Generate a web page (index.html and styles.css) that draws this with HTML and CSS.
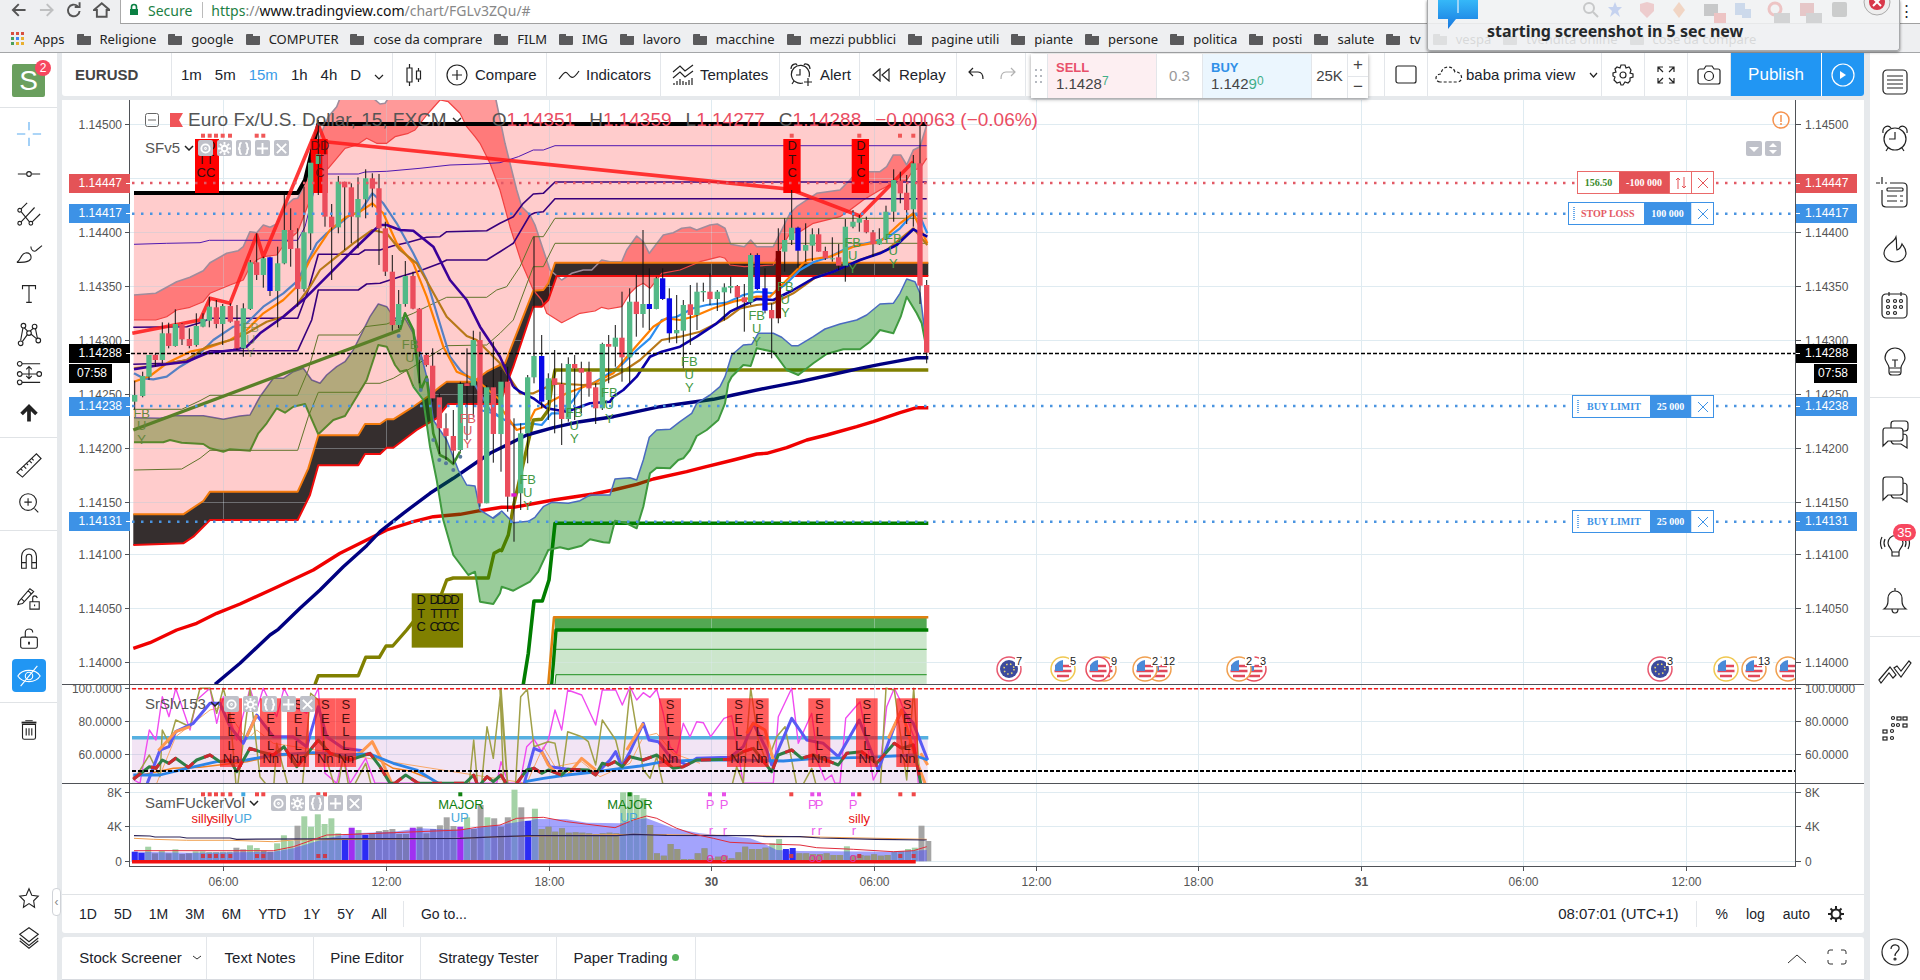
FILE: index.html
```html
<!DOCTYPE html>
<html lang="en">
<head>
<meta charset="utf-8">
<title>EURUSD chart</title>
<link rel="stylesheet" href="styles.css">
</head>
<body>
<div class="browser">
  <div class="navrow">
    <div class="navicons">
      <svg width="18" height="18" viewBox="0 0 18 18"><path d="M16 9H3M9 3L3 9l6 6" class="nv"/></svg>
      <svg width="18" height="18" viewBox="0 0 18 18" opacity=".3"><path d="M2 9h13M9 3l6 6-6 6" class="nv"/></svg>
      <svg width="18" height="18" viewBox="0 0 18 18"><path d="M15 10a6 6 0 1 1-2-5M15 1v5h-5" class="nv"/></svg>
      <svg width="18" height="18" viewBox="0 0 18 18"><path d="M1 9l8-7 8 7h-3v7H4V9z" class="nv"/></svg>
    </div>
    <div class="urlbar">
      <svg width="10" height="14" viewBox="0 0 10 14"><path d="M2.500 6V4a2.500 2.500 0 0 1 5 0v2" fill="none" stroke="#0b8043" stroke-width="1.600"/><rect x="1" y="6" width="8" height="6" fill="#0b8043"/></svg>
      <span class="green">Secure</span><i class="bar"></i>
      <span class="url"><span class="green">https</span>://<b>www.tradingview.com</b>/chart/FGLv3ZQu/#</span>
    </div>
  </div>
  <nav class="bookmarks">
    <a href="#" class="apps"><svg width="14" height="14" viewBox="0 0 14 14"><g fill="#d8503f"><path d="M0 0h3v3H0zM5 0h3v3H5zM10 0h3v3h-3z"/></g><path d="M0 5h3v3H0zM0 10h3v3H0z" fill="#4aa05a"/><path d="M5 5h3v3H5z" fill="#4285f4"/><path d="M10 5h3v3h-3zM5 10h3v3H5zM10 10h3v3h-3z" fill="#e8b030"/></svg>Apps</a>
    <a href="#">Religione</a><a href="#">google</a><a href="#">COMPUTER</a><a href="#">cose da comprare</a><a href="#">FILM</a><a href="#">IMG</a><a href="#">lavoro</a><a href="#">macchine</a><a href="#">mezzi pubblici</a><a href="#">pagine utili</a><a href="#">piante</a><a href="#">persone</a><a href="#">politica</a><a href="#">posti</a><a href="#">salute</a><a href="#">tv</a><a href="#">vespa</a><a href="#">tvendita online</a><a href="#">cose da compare</a>
  </nav>
  <div class="toast">
    <svg class="bubble" width="40" height="30" viewBox="0 0 40 30"><defs><linearGradient id="bg" x2="0" y2="1"><stop stop-color="#35b8f8"/><stop offset="1" stop-color="#1878e0"/></linearGradient></defs><path d="M0 0h40v19H18L10 29V19H0z" fill="url(#bg)"/><path d="M19 0h2v13h-2z" fill="#9cd4f8"/></svg>
    <span class="ghosts"><svg width="300" height="26" viewBox="0 0 300 26"><g opacity=".22"><circle cx="19" cy="8" r="5" fill="none" stroke="#333" stroke-width="2"/><path d="M23 12l5 5" stroke="#333" stroke-width="2"/><path d="M45 2l2 5h5l-4 4 2 6-5-4-5 4 2-6-4-4h5z" fill="#2a5fe0"/><path d="M70 4l7-2 7 2v7l-7 7-7-7z" fill="#e04848"/><path d="M109 2l6 8-6 8-6-8z" fill="#f07020"/><rect x="134" y="4" width="14" height="12" fill="#333"/><rect x="144" y="13" width="12" height="10" fill="#e02020"/><path d="M165 3h10v12h-10zM172 9h9v9h-9z" fill="#4a80d0"/><circle cx="205" cy="9" r="6" fill="none" stroke="#e02020" stroke-width="3"/><rect x="204" y="13" width="16" height="10" fill="#666"/><rect x="230" y="3" width="14" height="13" fill="#c03030"/><rect x="236" y="13" width="16" height="10" fill="#666"/><rect x="262" y="2" width="15" height="15" rx="2" fill="#444"/></g></svg></span>
    <strong>starting screenshot in 5 sec new</strong>
    <button class="tclose" aria-label="Close notification"><svg width="28" height="28" viewBox="0 0 28 28"><circle cx="14" cy="14" r="13" fill="#eee" stroke="#aaa"/><circle cx="14" cy="14" r="8" fill="#d8384a"/><path d="M10 10l8 8M18 10l-8 8" stroke="#fff" stroke-width="2"/></svg></button>
  </div>
  <span class="kebab">⋮</span>
</div>

<div class="app">
  <aside class="left">
    <div class="avatarbox"><span class="avatar">S</span><span class="badge two">2</span></div>
    <div class="tools a">
      <button aria-label="Cursor"><svg viewBox="0 0 28 28"><path d="M14 1v9M14 18v9M1 14h9M18 14h9" stroke="#5aabf0"/></svg></button>
      <button aria-label="Line"><svg viewBox="0 0 28 28"><path d="M2 14h9M17 14h9"/><circle cx="14" cy="14" r="2.500"/></svg></button>
      <button aria-label="Pitchfork"><svg viewBox="0 0 28 28"><circle cx="4" cy="10" r="2"/><circle cx="4" cy="24" r="2"/><circle cx="16" cy="24" r="2"/><path d="M5.500 8.500L12 2M5.500 22.500L20 7M17.500 22.500L26 14M5.500 11.500l9 11"/></svg></button>
      <button aria-label="Brush"><svg viewBox="0 0 28 28"><path d="M1 23c4-2 4-9 9-10 4-1 7 2 6 6-2 4-8 4-15 4zM16 6c0 5 4 6 6 4l6-5"/></svg></button>
      <button aria-label="Text"><svg viewBox="0 0 28 28"><path d="M7 9V5h14v4M14 5v18M11 23h6"/></svg></button>
      <button aria-label="Patterns"><svg viewBox="0 0 28 28"><circle cx="8" cy="5" r="2.500"/><circle cx="20" cy="6" r="2.500"/><circle cx="14" cy="13" r="2.500"/><circle cx="5" cy="24" r="2.500"/><circle cx="24" cy="21" r="2.500"/><path d="M7.500 7.500L5 21M9 7.500l4 4M18.500 8L15 11M21 8.500l2 10M12 15l-5 7M16 14l6 5"/></svg></button>
      <button aria-label="Prediction"><svg viewBox="0 0 28 28"><circle cx="4" cy="3" r="2.500"/><circle cx="4" cy="14" r="2.500"/><circle cx="4" cy="23" r="2.500"/><circle cx="25" cy="14" r="2.500"/><path d="M6.500 3H26M6.500 14h16M6.500 23H26M14 6v13M11 9l3-3 3 3M11 16l3 3 3-3"/></svg></button>
      <button aria-label="Arrow"><svg viewBox="0 0 28 28"><path d="M14 22V9M6 14l8-8 8 8" stroke-width="4"/></svg></button>
    </div>
    <div class="tools b">
      <button aria-label="Ruler"><svg viewBox="0 0 28 28"><path d="M1 22L22 2l5 5L7 27zM5 18l2 2M8 15l3 3M11 12l2 2M14 9l3 3M17 7l2 2"/></svg></button>
      <button aria-label="Zoom in"><svg viewBox="0 0 28 28"><circle cx="13" cy="13" r="9"/><path d="M20 20l4 4M9 13h8M13 9v8"/></svg></button>
    </div>
    <div class="tools c">
      <button aria-label="Magnet"><svg viewBox="0 0 28 28"><path d="M6 25V12a8 8 0 0 1 16 0v13h-5V13c0-4-6-4-6 0v12zM6 19h5M17 19h5"/></svg></button>
      <button aria-label="Stay in drawing mode"><svg viewBox="0 0 28 28"><path d="M3 18L15 4l4 3L7 20l-5 1zM6 15l3 3M13 6l4 4M15 18h10v8H15zM18 18v-4c0-3 4-3 5 0M20 21v2"/></svg></button>
      <button aria-label="Lock drawings"><svg viewBox="0 0 28 28"><rect x="5" y="13" width="18" height="12" rx="2"/><path d="M10 13V8c0-5 8-5 8 0"/><path d="M14 18v3" stroke-width="2"/></svg></button>
      <button class="on" aria-label="Hide drawings"><svg viewBox="0 0 28 28"><path d="M2 14c5-8 19-8 24 0-5 8-19 8-24 0zM23 3L5 25"/><circle cx="14" cy="14" r="4"/></svg></button>
    </div>
    <div class="tools d">
      <button aria-label="Remove"><svg viewBox="0 0 28 28"><path d="M7 8v14c0 2 1 2 2 2h10c1 0 2 0 2-2V8zM11 12v8M14 12v8M17 12v8M10 4h8"/><path d="M6 6h16" stroke-width="2"/></svg></button>
    </div>
    <div class="tools e">
      <button aria-label="Favorites"><svg viewBox="0 0 28 28"><path d="M14 4l3 7 7 1-5 5 1 7-6-4-6 4 1-7-5-5 7-1z"/></svg></button>
      <button aria-label="Object tree"><svg viewBox="0 0 28 28"><path d="M14 3l10 7-10 8-10-8zM4 14l10 8 10-8M4 17l10 8 10-8"/></svg></button>
    </div>
    <button class="fold" aria-label="Collapse toolbar">‹</button>
  </aside>

  <main class="center">
    <header class="topbar">
      <div class="cell sym">EURUSD</div>
      <div class="cell ints"><button>1m</button><button>5m</button><button class="act">15m</button><button>1h</button><button>4h</button><button>D</button><button aria-label="More intervals"><svg width="10" height="6" viewBox="0 0 10 6"><path d="M1 1l4 4 4-4"/></svg></button></div>
      <button class="cell candle" aria-label="Candles"><svg width="18" height="24" viewBox="0 0 18 24"><path d="M2 5h5v14H2zM4.500 1v4M4.500 19v4M11.500 8h4v8h-4zM13.500 5v3M13.500 16v3"/></svg></button>
      <button class="cell cmp"><svg width="22" height="22" viewBox="0 0 22 22"><circle cx="11" cy="11" r="10"/><path d="M6 11h10M11 6v10"/></svg>Compare</button>
      <button class="cell ind"><svg width="22" height="12" viewBox="0 0 22 12"><path d="M1 10c4-5 6-9 9-5s5 6 11-3"/></svg>Indicators</button>
      <button class="cell tpl"><svg width="22" height="22" viewBox="0 0 22 22"><path d="M1 8l7-6 5 5 8-6M1 14l7-6 5 5 8-6M2 21v-2M5 21v-4M8 21v-6M11 21v-4M14 21v-3M17 21v-5M20 21v-7"/></svg>Templates</button>
      <button class="cell alr"><svg width="23" height="23" viewBox="0 0 23 23"><path d="M13 20A9 9 0 1 1 19 14M10 6v6H6M1 6c0-5 5-6 6-4M20 6c0-5-5-6-6-4M18 15v8M14 19h8M4 18l-2 3"/></svg>Alert</button>
      <button class="cell rep"><svg width="18" height="14" viewBox="0 0 18 14"><path d="M8 1v12L1 7zM17 1v12l-7-6z"/></svg>Replay</button>
      <div class="cell undo"><button aria-label="Undo"><svg width="16" height="13" viewBox="0 0 16 13"><path d="M5 1L1 5l4 4M1 5h9c4 0 5 3 5 7"/></svg></button><button aria-label="Redo" class="dim"><svg width="16" height="13" viewBox="0 0 16 13"><path d="M11 1l4 4-4 4M15 5H6c-4 0-5 3-5 7"/></svg></button></div>
      <div class="trade">
        <span class="grip"><svg width="8" height="15" viewBox="0 0 8 15"><path d="M0 1h2M5 1h2M0 7h2M5 7h2M0 13h2M5 13h2" stroke="#b5b9c0" stroke-width="2"/></svg></span>
        <button class="sell"><b>SELL</b><span>1.1428<i>7</i></span></button>
        <span class="spread">0.3</span>
        <button class="buy"><b>BUY</b><span>1.142<em>9</em><i>0</i></span></button>
        <span class="qty">25K</span>
        <span class="pm"><button>+</button><button>−</button></span>
      </div>
      <div class="cell spacer"></div>
      <button class="cell lay" aria-label="Layout"><svg width="22" height="19" viewBox="0 0 22 19"><rect x="1" y="1" width="20" height="17" rx="2"/></svg></button>
      <button class="cell view"><svg width="28" height="17" viewBox="0 0 28 17"><path d="M5 16c-6-1-5-8 1-8C7-1 18-1 20 6c7-1 9 9 3 10z" stroke-dasharray="3 2"/></svg>baba prima view<svg width="9" height="6" viewBox="0 0 9 6" class="chev"><path d="M1 1l3.500 4L8 1"/></svg></button>
      <button class="cell gear" aria-label="Settings"><svg width="22" height="22" viewBox="0 0 22 22"><circle cx="11" cy="11" r="3"/><path d="M9 1h4l1 3 3-1 2 3-1 3 3 1v3l-3 1 0 3-2 2-3-1-2 3h-2l-1-3-3 1-3-3 1-3-2-1V9l3-1-1-3 2-2 3 1z"/></svg></button>
      <button class="cell full" aria-label="Fullscreen"><svg width="18" height="18" viewBox="0 0 18 18"><path d="M1 6V1h5M12 1h5v5M17 12v5h-5M6 17H1v-5M1 1l5 5M17 1l-5 5M17 17l-5-5M1 17l5-5"/></svg></button>
      <button class="cell cam" aria-label="Snapshot"><svg width="24" height="20" viewBox="0 0 24 20"><path d="M3 4h4l2-3h6l2 3h4c1 0 2 1 2 2v11c0 1-1 2-2 2H3c-1 0-2-1-2-2V6c0-1 1-2 2-2z"/><circle cx="12" cy="11" r="4.500"/></svg></button>
      <button class="pub">Publish</button>
      <button class="play" aria-label="Stream"><svg width="24" height="24" viewBox="0 0 24 24"><circle cx="12" cy="12" r="11" fill="none" stroke="#fff"/><path d="M9 8v8l6-4z" fill="#fff" stroke="none"/></svg></button>
    </header>

    <section class="chart">
      <svg id="plot" viewBox="62 100 1802 794" preserveAspectRatio="xMinYMin meet" role="img" aria-label="EURUSD 15 minute chart"></svg>
      <div class="legend main">
        <svg width="14" height="14" viewBox="0 0 14 14"><rect x=".5" y=".5" width="13" height="13" rx="2" fill="none" stroke="#666"/><path d="M3 7h8" stroke="#666"/></svg>
        <svg class="flag" width="13" height="14" viewBox="0 0 13 14"><path d="M0 0h13l-4 7 4 7H0z" fill="#f05458"/></svg>
        <span class="ttl">Euro Fx/U.S. Dollar, 15, FXCM</span>
        <svg width="10" height="6" viewBox="0 0 10 6"><path d="M1 1l4 4 4-4" fill="none" stroke="#333" stroke-width="1.500"/></svg>
        <span class="ohlc"><span>O<b>1.14351</b></span><span>H<b>1.14359</b></span><span>L<b>1.14277</b></span><span>C<b>1.14288</b></span><b>−0.00063 (−0.06%)</b></span>
      </div>
      <div class="legend l1"><span>SFv5</span></div>
      <div class="legend l2"><span>SrSlv153</span></div>
      <div class="legend l3"><span>SamFUckerVol</span></div>
      <svg class="warn" width="18" height="18" viewBox="0 0 18 18"><circle cx="9" cy="9" r="8" fill="none" stroke="#f5924e" stroke-width="1.500"/><path d="M9 4v7M9 12v2" stroke="#f5924e" stroke-width="1.500"/></svg>
      <div class="panebtns"><button aria-label="Collapse pane"><svg viewBox="0 0 16 15"><path d="M3 6h10l-5 5z" fill="#fff" stroke="none"/></svg></button><button aria-label="Maximize pane"><svg viewBox="0 0 16 15"><path d="M4 6l4-4 4 4zM4 9h8l-4 4z" fill="#fff" stroke="none"/></svg></button></div>
      <div class="order o1 red"><span class="pl">156.50</span><span class="q">-100 000</span><button aria-label="Reverse"><svg width="12" height="12" viewBox="0 0 12 12"><path d="M3 12V1M1 3l2-2 2 2M9 0v11M7 9l2 2 2-2"/></svg></button><button aria-label="Close position"><svg width="10" height="10" viewBox="0 0 10 10"><path d="M0 0l10 10M10 0L0 10"/></svg></button></div>
      <div class="order o2"><span class="name stop">STOP LOSS</span><span class="q">100 000</span><button aria-label="Cancel stop loss"><svg width="10" height="10" viewBox="0 0 10 10"><path d="M0 0l10 10M10 0L0 10"/></svg></button></div>
      <div class="order o3"><span class="name">BUY LIMIT</span><span class="q">25 000</span><button aria-label="Cancel order"><svg width="10" height="10" viewBox="0 0 10 10"><path d="M0 0l10 10M10 0L0 10"/></svg></button></div>
      <div class="order o4"><span class="name">BUY LIMIT</span><span class="q">25 000</span><button aria-label="Cancel order"><svg width="10" height="10" viewBox="0 0 10 10"><path d="M0 0l10 10M10 0L0 10"/></svg></button></div>
    </section>

    <div class="rangebar">
      <div class="ranges"><button>1D</button><button>5D</button><button>1M</button><button>3M</button><button>6M</button><button>YTD</button><button>1Y</button><button>5Y</button><button>All</button></div>
      <button class="goto">Go to...</button>
      <span class="clock">08:07:01 (UTC+1)</span>
      <div class="scale"><button>%</button><button>log</button><button>auto</button><button aria-label="Chart settings"><svg width="16" height="16" viewBox="0 0 16 16"><circle cx="8" cy="8" r="4.500" fill="none" stroke="#222" stroke-width="2"/><path d="M8 0v3M8 13v3M0 8h3M13 8h3M2.500 2.500l2 2M11.500 11.500l2 2M2.500 13.500l2-2M11.500 4.500l2-2" stroke="#222" stroke-width="2"/></svg></button></div>
    </div>

    <footer class="tabs">
      <button class="t1">Stock Screener<svg width="10" height="6" viewBox="0 0 10 6"><path d="M1 1l4 3 4-3" fill="none" stroke="#333"/></svg></button><button class="t2">Text Notes</button><button class="t3">Pine Editor</button><button class="t4">Strategy Tester</button><button class="t5">Paper Trading<i class="live"></i></button>
      <div class="tright"><button aria-label="Expand"><svg width="20" height="10" viewBox="0 0 20 10"><path d="M1 9l9-8 9 8" fill="none" stroke="#333"/></svg></button><button aria-label="Maximize"><svg width="20" height="16" viewBox="0 0 20 16"><path d="M1 5V3q0-2 2-2h3M14 1h3q2 0 2 2v2M19 11v2q0 2-2 2h-3M6 15H3q-2 0-2-2v-2" fill="none" stroke="#333"/></svg></button></div>
    </footer>
  </main>

  <aside class="right">
    <div class="rg">
      <button aria-label="Watchlist"><svg viewBox="0 0 28 28"><rect x="2" y="2" width="24" height="24" rx="4"/><path d="M6 8h16M6 12h16M6 16h16M6 20h16"/></svg></button>
      <button aria-label="Alerts"><svg viewBox="0 0 28 28"><circle cx="14" cy="15" r="11"/><path d="M14 8v7H8M2 9C1 3 7 0 10 4M26 9c1-6-5-9-8-5M7 24l-2 3M21 24l2 3"/></svg></button>
      <button aria-label="Data window"><svg viewBox="0 0 28 28"><path d="M9 3h13q4 0 4 4v16q0 4-4 4H5q-4 0-4-4V10M1-3v7M-5 3h4M4 3h2M6 16h10M6 21h10M19 16h3M19 21h3"/><rect x="6" y="8" width="16" height="3" rx="1"/></svg></button>
      <button aria-label="Hotlists"><svg viewBox="0 0 28 28"><path d="M15 1C13 7 3 9 3 17c0 12 22 12 22 0 0-5-3-7-4-9-1 3-2 5-5 6-1-3 0-8-1-13z"/></svg></button>
      <button aria-label="Calendar"><svg viewBox="0 0 28 28"><rect x="1" y="2" width="25" height="24" rx="4"/><path d="M8 0v4M20 0v4"/><g><circle cx="7" cy="9" r="1.500"/><circle cx="14" cy="9" r="1.500"/><circle cx="20" cy="9" r="1.500"/><circle cx="7" cy="15" r="1.500"/><circle cx="14" cy="15" r="1.500"/><circle cx="20" cy="15" r="1.500"/><circle cx="7" cy="21" r="1.500"/><circle cx="14" cy="21" r="1.500"/></g></svg></button>
      <button aria-label="Ideas"><svg viewBox="0 0 28 28"><path d="M8 20c0-4-4-6-4-10a10 10 0 0 1 20 0c0 4-4 6-4 10v4q0 3-3 3h-6q-3 0-3-3zM8 20h12M9 24h10M14 19v-7M11 12h6"/></svg></button>
    </div>
    <div class="rg">
      <button aria-label="Public chats"><svg viewBox="0 0 28 28"><path d="M4 9h15q3 0 3 3v7q0 3-3 3H7l-5 5V12q0-3 2-3zM10 9V5q0-3 3-3h11q3 0 3 3v4q0 3-3 3h-2M22 15q4 0 4 3v11l-6-4h-7q-2 0-3-3"/></svg></button>
      <button aria-label="Private chats"><svg viewBox="0 0 28 28"><path d="M5 2h14q3 0 3 3v12q0 3-3 3H7l-5 5V5q0-3 3-3zM22 8q4 0 4 3v16l-6-4h-7q-2 0-3-3"/></svg></button>
      <button aria-label="Streams"><svg viewBox="0 0 28 28"><path d="M11 21c0-3-4-5-4-9a7.500 7.500 0 0 1 15 0c0 4-4 6-4 9v4h-7zM11 21h7M1 6q-3 6 0 12M4 8q-2 4 0 8M27 6q3 6 0 12M24 8q2 4 0 8"/></svg><span class="badge n35">35</span></button>
      <button aria-label="Notifications"><svg viewBox="0 0 28 28"><path d="M3 22q4-3 4-8v-3a7 7 0 0 1 14 0v3q0 5 4 8zM11 22q0 4 3 4t3-4M14 4V1"/></svg></button>
    </div>
    <div class="rg">
      <button aria-label="Order panel"><svg viewBox="0 0 28 28"><path d="M-2 22L9 9l6 8-3 3-4-5-8 10zM30 5L20 19l-7-9 3-2 4 5 8-10z"/></svg></button>
      <button aria-label="Depth of market"><svg viewBox="0 0 28 28"><g><rect x="2" y="16" width="4" height="3"/><rect x="2" y="23" width="4" height="3"/><circle cx="11" cy="17" r="1.500"/><circle cx="11" cy="24" r="1.500"/><circle cx="12" cy="4" r="1.500"/><circle cx="12" cy="11" r="1.500"/><circle cx="17" cy="11" r="1.500"/><rect x="16" y="3" width="4" height="3"/><rect x="22" y="3" width="4" height="3"/><rect x="22" y="10" width="4" height="3"/></g></svg></button>
    </div>
    <div class="rg last"><button aria-label="Help"><svg viewBox="0 0 28 28"><circle cx="14" cy="14" r="13"/><path d="M10 11c0-6 9-5 8 0-1 3-4 3-4 7"/><circle cx="14" cy="21" r="1"/></svg></button></div>
  </aside>
</div>
<script src="chart.js"></script>
</body>
</html>
```
FILE: styles.css
```css
* { box-sizing: border-box; }
body { margin: 0; height: 100vh; display: flex; flex-direction: column; overflow: hidden; background: #e6e9ec; color: #20232b; font-family: "Liberation Sans", Arial, sans-serif; font-size: 15px; }
button { font: inherit; color: inherit; background: none; border: 0; padding: 0; margin: 0; cursor: pointer; }
a { color: inherit; text-decoration: none; }

.browser { position: relative; flex: none; font-family: "Noto Sans", sans-serif; background: #eeeff1; border-bottom: 1px solid #a4a6a8; }
.navrow { display: flex; height: 24px; overflow: hidden; }
.navicons { display: flex; gap: 10px; padding: 1px 10px; width: 120px; }
.nv { fill: none; stroke: #555; stroke-width: 2; }
.urlbar { flex: 1; display: flex; align-items: center; background: #fff; border-left: 1px solid #aaa; border-bottom: 1px solid #a0a0a0; padding: 0 8px 3px; font-size: 14px; color: #888; }
.urlbar .green { color: #1c8043; }
.urlbar svg + .green { margin-left: 9px; }
.url b { font-weight: 400; color: #111; }
.bar { width: 1px; height: 16px; background: #bbb; margin: 0 8px 0 10px; }
.bookmarks { display: flex; gap: 12px; height: 28px; align-items: center; padding: 2px 0 0 11px; font-size: 13px; color: #222; white-space: nowrap; }
.bookmarks a { display: flex; align-items: center; gap: 9px; }
.bookmarks a:not(.apps)::before { content: ""; width: 14px; height: 11px; border-radius: 1px; background: linear-gradient(#eeeff1, #eeeff1) 100% 0 / 7px 2px no-repeat, #5a5a5c; }
.toast { position: absolute; right: 20px; top: 0; width: 473px; height: 51px; background: rgba(240,241,242,.88); border: 1px solid #a8aaac; border-top: 0; box-shadow: 0 1px 3px rgba(0,0,0,.5); border-radius: 0 0 3px 3px; }
.toast strong { position: absolute; left: 59px; top: 20px; font-size: 16px; line-height: 22px; color: #26292b; white-space: nowrap; }
.bubble { position: absolute; left: 10px; top: 0; }
.ghosts { position: absolute; left: 142px; top: 0; }
.tclose { position: absolute; right: 8px; top: -12px; }
.kebab { position: absolute; right: 6px; top: 0; font-size: 15px; line-height: 20px; }

.app { flex: 1; min-height: 0; display: flex; }
.left { position: relative; flex: none; width: 57px; background: #fff; display: flex; flex-direction: column; }
.avatarbox { position: relative; height: 54px; padding: 11px 12px; }
.avatar { display: block; width: 33px; height: 33px; border-radius: 2px; background: #6a9f5e; color: #fff; font-size: 28px; line-height: 33px; text-align: center; }
.badge { position: absolute; background: #f7475f; color: #fff; border-radius: 9px; text-align: center; }
.two { left: 35px; top: 7px; width: 16px; height: 16px; font-size: 12px; line-height: 16px; }
.tools { display: flex; flex-direction: column; align-items: center; border-top: 1px solid #e0e3e6; padding-bottom: 4px; }
.tools button { height: 40px; width: 34px; display: flex; align-items: center; justify-content: center; }
.tools svg, .rg svg { width: 28px; height: 28px; fill: none; stroke: #222; stroke-width: 1.2; overflow: visible; }
.tools.a { padding: 6px 0 3px; }
.tools.b { padding: 8px 0; }
.tools.b button { height: 38px; }
.tools.c { padding-top: 7px; }
.tools.d { padding-top: 7px; }
.tools.e { margin-top: auto; border: 0; padding-bottom: 22px; }
.tools .on { background: #2196f3; border-radius: 4px; height: 33px; margin: 1px 0 6px; }
.tools .on svg { stroke: #fff; }
.tools button svg { width: 26px; height: 26px; }
.fold { position: absolute; right: -4px; bottom: 64px; width: 9px; height: 28px; background: #fff; border: 1px solid #d0d3d8; border-radius: 4px; color: #888; font-size: 12px; line-height: 24px; }

.center { flex: 1; min-width: 0; margin: 0 6px 0 5px; display: flex; flex-direction: column; }
.topbar { position: relative; z-index: 2; flex: none; height: 43px; display: flex; background: #fff; border-radius: 0 0 3px 3px; white-space: nowrap; }
.topbar svg { fill: none; stroke: #222; stroke-width: 1.2; flex: none; }
.cell { display: flex; align-items: center; border-right: 1px solid #e3e6ea; }
.sym { width: 110px; padding-left: 13px; font-weight: 700; color: #444; }
.ints { width: 221px; padding-left: 9px; gap: 13px; }
.ints .act { color: #3a9be8; }
.candle { width: 43px; justify-content: center; }
.cmp { width: 111px; padding-left: 10px; gap: 7px; }
.ind { width: 114px; padding-left: 11px; gap: 6px; }
.tpl { width: 119px; padding-left: 11px; gap: 6px; }
.alr { width: 80px; padding-left: 10px; gap: 7px; }
.rep { width: 97px; padding-left: 12px; gap: 9px; }
.undo { width: 69px; padding-left: 11px; gap: 16px; }
.dim { opacity: .35; }
.trade { display: flex; width: 337px; height: 44px; margin: 1px 0 0 5px; background: #fff; box-shadow: 0 1px 4px rgba(0,0,0,.4); color: #444; font-size: 15px; }
.grip { width: 16px; display: grid; place-items: center; }
.sell, .buy { display: flex; flex-direction: column; justify-content: center; align-items: flex-start; width: 110px; padding-left: 8px; line-height: 17px; border: 1px solid #e3e6ea; border-width: 0 1px; }
.sell { background: #fdeff2; }
.buy { background: #ebf6fe; }
.sell b, .buy b { font-size: 13px; line-height: 15px; color: #e8506a; }
.buy b { color: #2f90e8; }
.trade i, .trade em { font-style: normal; color: #3fae88; }
.trade i { font-size: 12px; vertical-align: 4px; line-height: 10px; }
.spread { width: 45px; line-height: 44px; text-align: center; color: #999; }
.qty { width: 35px; line-height: 44px; text-align: center; }
.pm { flex: 1; display: flex; flex-direction: column; border-left: 1px solid #e3e6ea; }
.pm button { flex: 1; font-size: 17px; line-height: 20px; }
.pm button + button { border-top: 1px solid #e3e6ea; }
.spacer { flex: 1; }
.lay, .gear, .full, .cam { width: 43px; justify-content: center; }
.view { width: 174px; padding-left: 7px; gap: 3px; }
.view .chev { margin-left: 11px; }
.pub { width: 91px; background: #2196f3; color: #fff; font-size: 17px; border-right: 1px solid #fff; }
.play { width: 42px; background: #2196f3; display: grid; place-items: center; border-radius: 0 0 3px 0; }

.chart { position: relative; flex: 1; min-height: 0; margin-top: 4px; background: #fff; }
#plot { display: block; width: 100%; height: 100%; }
#plot text { font-family: "Liberation Sans", Arial, sans-serif; }
.legend { position: absolute; left: 83px; display: flex; align-items: center; gap: 4px; font-size: 15px; line-height: 18px; color: #555; }
.legend.main { top: 7px; gap: 11px; font-size: 19px; line-height: 26px; white-space: nowrap; }
.flag + .ttl { margin-left: -6px; }
.ttl + svg { margin-left: -6px; }
.ohlc { display: flex; gap: 14px; margin-left: 19px; }
.ohlc b { font-weight: 400; color: #ea4d63; }
.legend.l1 { top: 39px; }
.legend.l2 { top: 595px; }
.legend.l3 { top: 694px; }
.legend .btns { display: flex; gap: 4px; }
.legend.l3 .btns { margin-left: 8px; }
.legend .btns button, .panebtns button { width: 15px; height: 16px; border-radius: 2px; background: #bfc1c9; display: grid; place-items: center; }
.legend .btns svg { width: 13px; height: 13px; fill: none; stroke: #fff; stroke-width: 2; }
.panebtns { position: absolute; right: 83px; top: 41px; display: flex; gap: 3px; }
.panebtns button { width: 16px; height: 15px; }
.warn { position: absolute; right: 74px; top: 11px; }
.order { position: absolute; right: 150px; display: flex; height: 23px; background: #fff; border: 1px solid #3d92e6; font: 700 10px/21px "Liberation Serif", serif; color: #3d92e6; white-space: nowrap; }
.order.red { border-color: #ea6a6a; }
.order .name { width: 77px; padding-left: 14px; background: repeating-linear-gradient(#6aaaea 0 1px, transparent 1px 2px) 4px 50% / 2px 14px no-repeat; }
.order .stop { color: #e45a64; padding-left: 12px; width: 75px; }
.order .q { background: #3d92e6; color: #fff; width: 41px; text-align: center; }
.order.o2 .q { width: 47px; }
.order.red .q { background: #e45357; width: 50px; }
.order .pl { width: 41px; text-align: center; color: #3a8a2a; }
.order button { width: 22px; display: grid; place-items: center; border-left: 1px solid #cfe3f8; }
.order.red button { border-color: #ea6a6a; }
.order svg { fill: none; stroke: #3d92e6; }
.order.red svg { stroke: #e45357; }
.o1 { top: 71px; } .o2 { top: 102px; } .o3 { top: 295px; } .o4 { top: 410px; }

.rangebar { flex: none; height: 39px; background: #fff; border-top: 1px solid #e0e3e6; display: flex; align-items: center; font-size: 14px; border-radius: 0 0 3px 3px; }
.ranges { display: flex; gap: 17px; padding: 0 16px 0 17px; height: 26px; border-right: 1px solid #e3e6ea; }
.goto { margin-left: 17px; }
.clock { margin-left: auto; padding-right: 17px; border-right: 1px solid #e3e6ea; font-size: 15px; line-height: 26px; }
.scale { display: flex; gap: 18px; padding: 0 20px 0 19px; align-items: center; }
.scale svg { display: block; }
.tabs { flex: none; height: 43px; margin: 4px 0 0; background: #fff; border-bottom: 1px solid #d8dbe0; border-radius: 3px 3px 0 0; display: flex; }
.tabs > button { border-right: 1px solid #e3e6ea; font-size: 15px; padding-bottom: 2px; }
.t1 { width: 145px; padding-left: 13px; } .t1 svg { margin: 0 0 2px 10px; }
.t2 { width: 107px; } .t3 { width: 107px; } .t4 { width: 136px; } .t5 { width: 139px; }
.live { display: inline-block; width: 7px; height: 7px; border-radius: 50%; background: #56b35c; margin: 0 0 2px 4px; }
.tright { margin-left: auto; display: flex; gap: 20px; padding-right: 17px; align-items: center; }

.right { flex: none; width: 50px; background: #fff; display: flex; flex-direction: column; }
.rg { display: flex; flex-direction: column; padding: 7px 0; border-bottom: 1px solid #e0e3e6; }
.rg:first-child { padding-top: 1px; }
.rg button { position: relative; height: 56px; display: grid; place-items: center; }
.rg:nth-child(3) { border: 0; }
.rg.last { margin-top: auto; border: 0; padding: 0; }
.n35 { right: 4px; top: 7px; width: 23px; height: 17px; font-size: 13px; line-height: 17px; }
```
FILE: chart.js
```javascript
(function () {
const svg = document.getElementById('plot');
const out = [];
// Data points are stored in thirds of a pixel, relative to the tile named by the letter before them.
const tile = { A: [0, 0], B: [0, 840], C: [1440, 0], D: [1440, 840], E: [180, 1740], F: [1500, 1740] };
const X = (t, x) => Math.round((tile[t][0] + x) / 3 * 10) / 10;
const Y = (t, y) => Math.round((tile[t][1] + y) / 3 * 10) / 10 + 100;
function pts(s, rev) {
  let t = 'A';
  const r = [];
  s.split(/\s+/).forEach(k => {
    if (tile[k]) t = k;
    else if (k) { const [x, y] = k.split(',').map(Number); r.push(X(t, x) + ',' + Y(t, y)); }
  });
  if (rev) r.reverse();
  return r.join(' ');
}
const line = (s, c, w, extra = '') => out.push(`<polyline points="${pts(s)}" fill="none" stroke="${c}" stroke-width="${w}" stroke-linejoin="round" ${extra}/>`);
const band = (a, b, c) => out.push(`<polygon points="${pts(a)} ${pts(b, true)}" fill="${c}"/>`);
const rect = (x, y, w, h, c, extra = '') => out.push(`<rect x="${x}" y="${y}" width="${w}" height="${h}" fill="${c}" ${extra}/>`);
const box = (t, x1, y1, x2, y2, c) => rect(X(t, x1), Y(t, y1), (x2 - x1) / 3, (y2 - y1) / 3, c);
const text = (x, y, s, size, c, anchor = 'middle', extra = '') => out.push(`<text x="${x}" y="${y}" font-size="${size}" fill="${c}" text-anchor="${anchor}" ${extra}>${s}</text>`);
const seg = (x1, y1, x2, y2, c, w = 1, extra = '') => out.push(`<line x1="${x1}" y1="${y1}" x2="${x2}" y2="${y2}" stroke="${c}" stroke-width="${w}" ${extra}/>`);
const openPane = id => out.push(`<g clip-path="url(#${id})">`);
const closePane = () => out.push('</g>');

out.push('<defs><clipPath id="p1"><rect x="130" y="100" width="1665" height="584"/></clipPath><clipPath id="p2"><rect x="130" y="685" width="1665" height="98"/></clipPath><clipPath id="p3"><rect x="130" y="784" width="1665" height="82"/></clipPath></defs>');

const gridX = [[223.5, '06:00'], [386.5, '12:00'], [549.5, '18:00'], [711.5, '30'], [874.5, '06:00'], [1036.5, '12:00'], [1198.5, '18:00'], [1361.5, '31'], [1523.5, '06:00'], [1686.5, '12:00']];
const gridY = [[124.5, '1.14500'], [178.5, ''], [232.5, '1.14400'], [286.5, '1.14350'], [340.5, '1.14300'], [394.5, '1.14250'], [448.5, '1.14200'], [502.5, '1.14150'], [554.5, '1.14100'], [608.5, '1.14050'], [662.5, '1.14000'], [688.5, '100.0000'], [721.5, '80.0000'], [754.5, '60.0000'], [792.5, '8K'], [826.5, '4K'], [861.5, '0']];
const grid = op => {
  gridX.forEach(g => seg(g[0], 100, g[0], 866, '#dfebf1', 1, `opacity="${op}"`));
  gridY.forEach(g => seg(130, g[0], 1795, g[0], '#dfebf1', 1, `opacity="${op}"`));
};
grid(1);

/* price pane */
openPane('p1');
const topEdge = 'A 402,279 893,279 915,240 955,72 C 1342,72';
const cloudHi = 'B 400,403 550,403 610,363 630,335 893,335 925,265 955,166 1075,166 1095,132 1140,132 1160,118 1180,118 1240,80 1290,45 A 1320,860 1340,845 1420,845 1460,815 1500,795 C 75,790 160,572 190,570 205,550 225,488 1345,488';
const cloudLo = 'B 400,495 550,490 580,470 630,420 893,420 930,345 955,256 1075,256 1095,222 1140,222 1160,203 1180,203 1250,150 1310,115 1345,72 1500,72 C 60,910 85,840 100,800 160,620 185,620 205,600 230,528 1345,528';
band(topEdge, cloudHi, 'rgba(255,0,0,.2)');
const upHi = 'A 402,585 467,580 500,562 530,545 570,532 610,512 630,488 680,460 715,452 730,440 750,395 770,398 790,375 810,382 830,372 855,320 880,297 893,295 905,270 930,210 955,120 985,50 1010,20 1020,-5 1120,-5 1140,12 1155,10 1165,-5 1485,-5 C 48,0 75,130 110,270 125,320 150,345 165,375 190,450 210,510 245,540 275,520 310,510 335,510 365,480 390,485 425,485 440,450 470,408 490,425 508,460 550,405 580,398 605,385 630,382 650,390 690,375 712,372 735,385 752,433 793,440 812,420 830,440 880,440 900,400 930,340 950,320 1010,280 1080,270 1110,240 1130,215 1200,215 1220,200 1240,165 1262,165 1280,195 1300,150 1320,140 1340,75';
const upLo = 'A 402,660 467,660 500,650 530,630 570,622 610,605 630,580 690,555 730,540 750,500 770,480 790,470 830,465 855,430 893,395 930,300 955,230 985,205 1010,175 1035,145 1070,135 1100,115 1130,130 1160,130 1185,110 1225,100 1245,90 1280,45 1320,0 1345,5 1380,40 1400,80 1425,110 1440,130 C 30,190 60,270 90,380 125,490 160,570 185,600 200,640 245,668 300,640 345,633 365,622 385,627 425,620 450,580 470,560 490,550 510,565 530,540 545,520 600,510 660,485 720,470 735,475 750,495 793,500 880,495 900,450 930,400 960,395 1000,370 1080,350 1110,330 1150,300 1200,270 1240,250 1280,240 1300,210 1320,205 1340,175';
band(upHi, upLo, 'rgba(255,0,0,.4)');
band(cloudHi, cloudLo, 'rgba(20,12,12,.86)');
const gUp1 = 'B 402,113 480,115 520,107 610,107 670,118 720,108 750,105 780,50 A 820,835 850,835 880,815 910,805 935,840 960,850 980,825 1010,800 1035,785 1060,750 1085,700 1110,650 1135,612 1160,620 1180,650 1200,665 1215,655 1240,700';
const gUp2 = 'A 1240,700 1262,760 1285,850 B 1300,120 1320,150 1340,180 1375,270 1400,315 1425,318 1440,390 1480,415 1500,400 D 40,413 65,393 100,428 145,424 165,412 190,380 215,367 265,370 300,362 330,345 390,345 405,297 450,293 470,300 490,240 508,172 530,150 570,148 600,125 635,100 650,70 690,45 720,20 C 735,830 755,765 790,735 815,733 835,700 880,700 905,712 935,737 955,737 1000,710 1035,687 1080,672 1130,660 1160,645 1200,612 1240,610 1260,580 1280,537 1305,545 1320,580 1340,740';
const gLo1 = 'B 402,187 490,187 510,180 545,188 610,192 630,205 670,215 690,208 750,212 775,160 800,130 830,85 855,98 880,80 915,72 955,163 1000,120 1035,108 1070,50 1100,0 A 1120,780 1135,735 1160,740 1185,795 1200,815 1220,810 1240,860';
const gLo2 = 'A 1240,860 B 1270,60 1290,200 1310,300 1330,420 1360,525 1405,585 1425,575 1440,665 1480,672 1500,640 D 65,620 100,632 150,605 175,575 205,510 240,502 265,508 305,497 330,478 370,487 388,488 405,422 440,430 470,445 490,380 510,280 530,263 570,265 595,240 610,235 630,210 650,168 680,150 715,120 735,70 745,10 C 755,830 790,795 812,798 830,745 880,755 920,810 955,825 1000,790 1040,762 1090,748 1140,748 1170,725 1200,690 1240,700 1262,650 1280,590 1310,640 1325,670 1340,750';
box('D', 225, 712, 1340, 750, '#52a852');
box('D', 225, 750, 1340, 915, '#cce6cc');
grid(.35);
line(upHi, '#a08c9c', 1.6); line(upLo, '#f24242', 1.2);
line(gUp1, '#7a58a8', 1.5);
line(gLo1, '#5a8a32', 2);
line('D 228,808 1340,808', '#1f8f1f', 1); line('D 225,913 228,884 1340,884', '#1f8f1f', 1);
line('A 402,433 500,430 600,428 628,421 893,421 915,380 955,222 1075,222 1095,216 1160,214 1260,205 1350,195 C 0,192 60,188 115,170 160,150 190,150 225,137 1340,137', '#5018b0', 1);
line('A 400,682 560,680 610,665 630,655 893,655 925,570 955,463 1075,463 1095,450 1140,450 1180,437 1220,428 1280,412 1320,410 1340,395 C 20,392 60,370 100,350 130,310 160,282 190,280 225,246 1340,246', '#38007c', 1.6);
line('A 400,793 500,790 560,780 630,752 893,752 935,660 955,570 1075,570 1100,552 1140,550 1200,530 1260,512 1320,490 1340,480 C 20,480 60,455 100,430 150,345 165,338 190,335 225,296 1340,296', '#38007c', 1.6);
line('B 400,88 545,88 600,62 630,46 893,46 925,-30 A 955,705 1075,705 1095,680 1160,672 1240,640 1280,620 1340,592 C 20,592 50,570 80,560 120,500 160,410 190,410 225,355 1340,355', '#62742c', 1);
line('B 402,270 545,267 600,235 630,211 893,211 925,110 955,37 1075,37 1095,10 1140,10 A 1180,835 1240,800 1340,737 C 20,735 60,700 100,660 160,500 190,500 225,430 1340,430', '#62742c', 1);
line(cloudHi, '#f27a0c', 2); line(cloudLo, '#f00c0c', 2);
line(topEdge, '#000', 4);
line('A 402,820 430,835 460,838 500,830 540,800 590,770 640,720 700,680 740,670 790,620 850,580 890,545 920,490 950,430 980,400 1020,370 1050,345 1080,335 1117,280 1150,310 1190,370 1240,460 1280,540 1310,640 1350,770 1380,810 1420,845 B 1470,90 1500,110', '#5680c4', 2.2);
line('D 0,90 40,100 100,135 150,130 185,135 215,100 245,100 280,60 310,15 C 330,855 380,825 430,790 470,750 510,715 545,660 590,650 640,625 680,615 740,608 790,585 830,575 880,580 920,550 960,510 1000,487 1050,470 1100,445 1160,430 1220,415 1260,385 1300,340 1320,350 1342,400', '#2c8ef0', 2.2);
line('A 402,845 450,828 500,790 570,755 620,745 690,720 740,690 790,640 850,600 890,560 930,480 990,390 1040,350 1080,335 1117,310 1150,340 1190,430 1240,490 1280,590 1330,740 1370,815 1430,840 B 1500,60 D 60,80 110,150 140,140 165,90 190,80 220,60 260,40 300,25 C 340,850 400,820 450,760 520,680 560,655 600,660 640,650 700,625 760,605 830,590 870,590 920,540 980,480 1050,470 1120,440 1200,425 1260,370 1300,340 1342,430', '#ff7f00', 2.2);
line('A 402,805 480,795 560,780 620,740 700,718 740,700 800,665 850,650 890,615 930,560 960,510 1010,470 1060,430 1117,390 1160,400 1200,450 1250,490 1290,560 1340,650 1400,708 1430,720 1500,790 C 120,880 160,880 225,850 310,855 360,850 420,820 480,780 545,720 600,710 660,695 740,655 780,625 830,615 880,610 940,580 1010,530 1060,515 1140,480 1220,450 1300,385 1342,435', '#b87818', 2.2);
line('A 402,808 480,795 560,785 620,760 700,750 740,740 780,700 850,650 920,590 960,550 1010,500 1060,450 1117,395 1140,375 1160,375 1200,390 1240,392 1300,440 1350,540 1400,600 1440,680 C 60,770 100,860', '#3a0098', 2.6);
line('C 100,860 D 120,35 160,55 200,85 260,95 330,70 390,65 C 400,890 430,870 470,830 510,770 545,755 600,740 650,710 710,670 750,635 830,597 880,600 940,570 1000,535 1060,515 1140,480 1200,460 1250,435 1300,388 1342,410', '#0a00a8', 2.6);
line('B 945,913 955,887 1075,887 1097,832 1138,832 1158,798 1178,798 1220,750 1260,700 1310,680 1340,600 1360,594 1465,594 1482,520 1500,510 D 65,512 85,465 100,380 130,250 160,120 185,118 205,90 215,20 C 225,810 1345,810', '#808000', 3.4);
line('D 130,913 145,820 162,663 187,663 207,600 225,430 1345,430', '#007d00', 3.6);
line('B 400,805 450,788 530,750 590,730 650,700 720,672 830,622 940,570 1020,520 1100,480 1160,450 1240,425 1300,410 1380,403 1440,392 D 65,382 100,382 220,360 340,342 400,330 470,313 520,297 620,275 670,262 760,240 830,222 860,220 920,203 980,180 1040,165 1130,140 1180,125 1260,98 1310,83 1345,83', '#f00000', 3.4);
line('B 645,913 720,850 810,765 835,748 900,685 960,630 1030,560 1100,497 1140,455 1210,400 1290,340 1360,295 1440,240 D 30,220 80,195 140,165 220,143 300,125 400,110 540,80 700,58 760,45 870,22 960,5 C 1050,825 1140,805 1200,793 1310,773 1345,773', '#000080', 3.4);
line('D 205,913 222,712 1345,712', '#e08010', 2.6);
line('D 215,913 228,750 1345,750', '#007d00', 3.4);
band(gUp1, gLo1, 'rgba(90,128,30,.46)'); band(gUp2, gLo2, 'rgba(0,128,0,.4)');
line(gUp2, '#4a6ac0', 1.5); line(gLo2, '#3f9a3f', 2);
line('B 400,150 A 1200,690', '#5a8028', 3.4);
line('A 1200,690 1215,640 1240,690 1262,870 1280,830 B 1300,160 1320,225 1340,235 1360,252 1380,215', '#3c8a28', 2.6);
line('A 397,700 600,660 630,595 690,610 770,405 790,470 955,75 975,125 C 930,268 1140,348 1300,185', '#ff1c1c', 3.6, 'opacity=".88"');

const col = { g: '#53b987', r: '#eb4d5c', b: '#0808e8', m: '#800000', p: '#e018d0' };
const candles = `A 404,885,905,842,930,g 428,828,888,815,892,g 447,765,830,765,840,g 466,765,780,762,800,r 487,700,780,667,790,g 506,700,738,668,745,r 526,672,738,628,740,g 546,672,718,670,735,r 568,717,738,685,745,r 589,678,735,640,740,g 609,657,680,640,682,g 628,620,662,590,682,g 649,622,672,600,685,r 668,618,672,612,735,g 691,618,665,610,668,r 711,662,745,615,750,r 730,625,745,610,770,g 751,487,627,480,630,g 770,487,525,400,540,r 790,475,525,470,563,g 810,472,573,470,588,b 833,490,573,440,682,g 853,390,490,285,493,g 872,390,447,325,500,r 893,445,567,385,620,r 912,397,567,260,575,g 932,188,400,180,450,g 995,350,382,312,540,r 1015,245,382,228,400,g 1034,245,262,245,450,r 1054,262,350,250,430,r 1074,297,352,232,445,g 1097,235,298,208,355,g 1117,235,266,220,322,r 1137,265,385,222,495,r 1156,385,515,365,528,r 1177,515,675,465,692,r 1196,612,675,570,685,g 1216,528,612,483,620,g 1239,528,626,515,628,r 1258,626,755,624,850,r 1279,765,795,760,800,r 1298,797,895,745,905,r 1318,892,985,880,1062,r 1338,985,1008,940,1080,r 1360,1008,1052,930,1092,r 1381,852,1050,845,1055,g 1401,850,858,745,1020,r 1420,720,857,692,950,g 1440,720,1210,695,1220,r 1460,862,1210,855,1210,g 1480,862,1002,725,1088,r
C 63,845,1002,810,1115,g 83,845,1190,800,1235,r 102,1180,1190,955,1325,p 122,1000,1180,970,1230,g 143,832,1000,825,1090,g 162,768,832,410,850,g 185,768,905,705,925,b 205,835,900,820,960,g 224,835,855,750,1000,r 245,852,957,790,1035,r 265,792,957,772,965,g 284,792,805,765,960,r 304,805,818,785,940,r 327,815,865,785,890,r 347,862,925,850,972,r 367,732,925,728,930,g 386,732,740,705,850,r 406,713,740,675,800,g 426,713,772,575,845,r 449,605,772,565,850,g 469,605,642,525,710,r 489,612,642,390,683,g 508,612,627,505,690,b 529,535,627,530,628,g 548,535,597,505,600,b 568,595,700,565,728,b 590,690,700,585,730,g 610,615,692,600,805,g 631,613,645,555,735,r 651,575,645,548,690,g 670,573,577,548,605,g 690,575,597,520,615,r 712,575,597,570,633,g 733,562,577,550,662,g 752,558,563,530,580,g 772,558,592,555,622,r 793,592,607,552,695,r 812,465,607,460,615,g 832,465,567,460,570,b 855,565,632,505,640,b 875,630,655,610,775,r 895,453,655,385,670,m 914,420,455,355,515,g 935,383,420,270,435,g 954,383,452,380,505,b 977,435,452,370,485,g 997,403,437,385,483,g 1016,403,455,385,455,r 1036,453,475,440,480,r 1057,475,478,412,485,g 1076,472,497,432,510,r 1096,380,497,357,545,g 1119,365,380,330,385,g 1138,355,368,345,395,g 1159,360,397,350,400,r 1179,397,433,390,470,r 1198,417,433,385,435,g 1218,335,417,317,420,g 1241,240,335,208,365,g 1261,242,280,215,310,r 1280,278,330,225,372,r 1300,190,328,165,380,g 1320,190,557,75,612,r 1340,555,758,540,790,r`;
[[585, 657, 'A'], [932, 983, 'A'], [910, 962, 'C'], [1115, 1167, 'C']].forEach(b => box(b[2], b[0], 117, b[1], 279, '#f00'));
function drawCandles(s) {
  let t = 'A';
  s.split(/\s+/).forEach(k => {
    if (tile[k]) { t = k; return; }
    const [x, a, b, w1, w2, c] = k.split(',');
    seg(X(t, +x), Y(t, +w1), X(t, +x), Y(t, +w2), '#111', 1);
    box(t, +x - 8, +a, +x + 8, +b, col[c]);
  });
}
drawCandles(candles);
drawCandles('A 955,163,192,60,285,g 975,163,350,120,380,r');
const stack = (t, x, ys, letters, size, c, extra) => ys.forEach((y, i) => text(X(t, x), Y(t, y + 13), letters[i], size, c, 'middle', extra));
stack('A', 618, [138, 178, 217], ['DD', 'TT', 'CC'], 13, '#301010');
stack('A', 960, [138, 178, 217], ['DD', 'T', 'C'], 13, '#601010');
stack('C', 937, [138, 178, 217], 'DTC', 13, '#301010');
stack('C', 1143, [138, 178, 217], 'DTC', 13, '#301010');
box('B', 1235, 640, 1389, 803, '#808000');
[1264, 1303, 1323, 1343, 1365].forEach(x => stack('B', x, [660, 700, 740], 'DTC', 13, '#111'));
const fb = ['FB', 'U', 'Y'];
stack('B', 425, [100, 137, 178], fb, 13, '#66863c');
stack('A', 752, [682, 720, 758], fb, 13, '#66863c', 'opacity=".6"');
stack('A', 1230, [735, 773], fb, 13, '#66863c');
stack('B', 1403, [115, 153, 192], fb, 13, '#e05a60');
stack('D', 143, [298, 337, 377], fb, 13, '#459945');
stack('D', 283, [98, 137, 177], fb, 13, '#459945');
stack('D', 388, [37, 75, 115], fb, 13, '#459945');
[[628, 785], [830, 648], [916, 560], [1118, 428], [1240, 415]].forEach(f => stack('C', f[0], [f[1], f[1] + 38, f[1] + 77], fb, 13, '#459945'));
[609, 629, 648, 668, 690, 770, 790].forEach(x => box('A', x - 6, 101, x + 6, 113, '#f05858'));
[935, 1138, 1260, 1300].forEach(x => box('C', x - 6, 101, x + 6, 113, '#f05858'));
[[1196, 708], [1262, 775], [1281, 840], [1262, 870], [1300, 1020], [1318, 1080], [1338, 1090], [1360, 1110], [1381, 1070]].forEach(d => out.push(`<circle cx="${X('A', d[0])}" cy="${Y('A', d[1])}" r="2" fill="#557a9a"/>`));
[[183, '#e25a66'], [213.7, '#4a94e0'], [406, '#4a94e0'], [521.7, '#4a94e0']].forEach(l => seg(132, l[0], 1795, l[0], l[1], 2.4, 'stroke-dasharray="2.5 6.500"'));
seg(131, 353.5, 1795, 353.5, '#000', 1.4, 'stroke-dasharray="4 2"');

/* economic events */
const us = (x, ring, tag, tx) => {
  out.push(`<circle cx="${x}" cy="669" r="12" fill="#fff" stroke="${ring}" stroke-width="1.500"/><path d="M${x - 8} 666h16M${x - 8.5} 671h17M${x - 6} 676h12" stroke="#e0485c" stroke-width="2.500"/><path d="M${x - 8} 671v-5q2-5 8-6v11z" fill="#4a8ad8"/>`);
  if (tag) tagNum(tx, tag);
};
const tagNum = (x, s) => { rect(x - 1, 655, 6.5 * s.length + 3, 11, '#fff'); text(x, 665, s, 11, '#222', 'start'); };
const eu = (x, tag) => {
  out.push(`<circle cx="${x}" cy="669" r="12" fill="#fff" stroke="#e85a70" stroke-width="1.500"/><circle cx="${x}" cy="669" r="9" fill="#3c4a9c"/><circle cx="${x}" cy="669" r="5" fill="none" stroke="#e8d870" stroke-width="1.500" stroke-dasharray="1.500 2.500"/>`);
  tagNum(x + 7, tag);
};
const or = '#f0a050', ye = '#f0c850', re = '#e85060';
eu(1009, '7'); us(1063, ye, '5', 1070); us(1104, or); us(1098, re, '9', 1111);
us(1159, or, '12', 1163); us(1145, or, '2', 1152); us(1254, re, '3', 1260); us(1239, or, '2', 1246);
eu(1660, '3'); us(1726, ye); us(1754, or, '13', 1758); us(1788, or);
closePane();

/* oscillator pane */
openPane('p2');
box('E', 216, 173, 2603, 310, 'rgba(190,120,200,.2)');
line('E 220,290 340,265 420,262 560,245 640,228 760,222 850,228 930,225 1000,265 1050,273 1120,300', '#f08020', 1.5);
line('E 290,310 347,170 450,90 490,80 520,120 560,180 590,150 640,190 F 80,310 130,200 165,260 245,245 300,290 390,250 430,170 470,160 520,220 600,250', '#f8a868', 1);
line('E 216,173 F 1285,173', '#56b0e0', 3.4);
line('E 222,300 240,310 268,150 288,180 307,50 327,110 347,25 390,150 410,60 450,25 470,130 490,50 530,180 570,25 590,90 610,25 650,110 672,25 700,80 740,100 775,25 795,280 830,310 850,230 870,310 917,235 945,310 1310,310 1323,245 1345,310 F 60,310 80,200 102,178 125,215 145,180 165,90 185,150 203,30 245,45 287,135 307,30 347,30 367,75 390,20 410,60 430,38 450,52 470,28 490,100 510,200 530,220 550,130 570,170 590,125 610,128 632,170 672,115 695,107 730,310 820,310 835,110 875,25 895,190 935,100 955,250 975,300 995,285 1005,310 1020,310 1037,115 1080,65 1120,300 1140,260 1160,80 1183,25 1200,60 1245,180 1255,310', '#f04cf0', 1.4);
line('E 222,300 268,225 300,290 307,150 327,190 347,120 390,140 420,25 450,25 470,100 490,25 510,100 530,340 570,25 600,290 640,340 650,190 690,340 725,340 752,40 775,60 800,240 830,340 850,230 870,340 917,250 940,340 1225,340 1241,180 1255,340 1262,340 1281,140 1300,235 1323,25 1345,340 F 0,30 12,340 45,340 62,50 82,28 102,200 145,185 165,190 185,290 203,155 245,170 265,185 287,255 307,120 347,180 367,260 390,30 430,270 450,295 470,230 495,340 690,340 710,260 730,310 752,25 775,180 800,250 830,170 855,140 895,340 935,265 955,340 1140,340 1158,25 1183,30 1220,300 1241,25 1262,340', '#a0a048', 1.5);
line('E 262,310 300,210 327,200 347,155 400,130 450,70 480,70 510,140 550,190 590,105 640,170 700,170 740,200 775,80 800,170 850,205 910,212', '#5a5af4', 3);
line('F 70,320 102,205 125,215 150,260 290,280 330,240 347,215 365,260 390,215 430,130 447,180 475,185 510,230 560,255 590,235 690,232 730,200 760,130 800,210 815,255 875,115 920,180 970,190 1015,230 1078,120 1135,270 1183,140 1205,90 1240,130 1283,240', '#5a5af4', 3);
['E 295,212 347,155 390,140', 'E 560,170 590,105', 'E 860,230 900,220 937,185 960,230 995,310', 'F 125,215 145,255 165,275', 'F 203,285 245,235 287,270', 'F 380,210 430,130', 'F 740,160 760,130 795,150 820,240', 'F 1165,175 1205,90 1245,230 1275,310', 'F 1262,220 1283,255'].forEach(s => line(s, '#ff9850', 3));
line('E 220,285 300,285 380,265 470,245 560,240 640,225 760,218 850,225 930,222 1000,250 1070,270 1135,310', '#2c84e8', 2.8);
line('F 75,305 130,295 200,285 270,278 340,268 420,258 490,245 600,240 720,240 850,243 950,235 1100,232 1240,225 1283,240', '#2c84e8', 2.8);
['E 220,298 268,260 288,265 307,240 327,250 347,235 385,262 410,240 450,225 480,245 510,240 530,275 570,205 600,215 640,225 672,200 710,260 775,180 810,220 870,240 930,220 960,260 990,310 1005,310 1037,285 1075,310 1215,310 1241,285 1255,320 1281,290 1300,305 1323,285 1345,320', 'F 50,310 80,270 102,265 125,280 145,270 185,285 203,268 265,270 287,285 307,250 325,255 345,245 367,260 390,230 430,240 470,225 520,265 550,260 590,240 690,238 730,215 760,205 815,275 835,225 875,210 905,235 940,225 1015,255 1040,220 1085,215 1130,250 1183,190 1205,205 1240,195 1262,310'].forEach(s => { line(s, '#2f7f45', 3); line(s, '#cc2830', 3, 'stroke-dasharray="10 12"'); });
const sells = [['E', 480, 546], ['E', 600, 664], ['E', 681, 747], ['E', 765, 827], ['E', 827, 888], ['F', 477, 543], ['F', 681, 750], ['F', 750, 806], ['F', 925, 991], ['F', 1068, 1133], ['F', 1189, 1254]];
sells.forEach(s => {
  box(s[0], s[1], 55, s[2], 261, 'rgba(255,16,16,.68)');
  stack(s[0], (s[1] + s[2]) / 2, [75, 115, 155, 196, 236], ['S', 'E', 'L', 'L', 'Nn'], 13, '#4a1010');
});
seg(132, 688.7, 1795, 688.7, '#ee1c1c', 1.6, 'stroke-dasharray="4 2"');
seg(132, 771, 1795, 771, '#000', 1.8, 'stroke-dasharray="4 2"');
closePane();

/* volume pane */
openPane('p3');
const vol = '515b 519b 500l 520k 513l 520k 508l 522k 520k 514l 514l 516l 516l 515l 515l 503a 508a 496l 504l 512k 515k 490l 466l 482l 437a 409l 440l 403l 432l 415l 460l 475b 443m 450l 465b 460k 453a 450a 447a 462k 462k 443m 440a 460k 447a 436a 412a 438a 440m 412l 447k 375a 412l 415a 440k 412a 329l 382a 423b 386l 447k 440k 455k 445k 458k 457k 458k 460k 462k 460k 458k 460k 337l 337l 345l 355l 435k 520k 527k 492k 507k 537k 537k 520k 505k 535k 530k 527k 535k 517k 500k 507k 507k 503k 490l 477l 507b 504b 520k 520k 522k 522k 520k 525k 525k 499l 527k 525k 527k 523k 527k 525k 515l 513l 507l 503l 437a 483a'.split(' ');
const vcol = { a: '#a5a5a5', l: '#a4d2a6', k: '#a8a878', b: '#2c2cf4', m: '#a030f0' };
const bars = which => vol.forEach((v, i) => {
  const y = parseInt(v, 10), c = v.slice(-1), x = 224 + 20.35 * i;
  if (which.includes(c)) box('E', x - 9, y, x + 9, 544, vcol[c]);
});
bars('alk');
band('E 220,515 400,518 640,515 700,505 800,475 880,460 1000,455 1080,445 1200,450 F 0,435 30,430 110,417 200,418 260,428 360,430 420,417 440,415 520,445 600,460 700,470 750,475 790,490 830,510 900,513 1180,515 1280,510', 'E 220,544 F 1280,544', 'rgba(72,72,250,.5)');
vol.forEach((v, i) => { if (v.endsWith('k') && i > 58) { const x = 224 + 20.35 * i; box('E', x - 9, parseInt(v, 10), x + 9, 544, 'rgba(160,160,110,.75)'); } });
bars('bm');
line('E 222,475 280,478 380,481 510,481 640,485 700,480 1200,475 F 0,470 400,463 760,467 900,470 1280,478', '#f0a050', 1);
line('E 222,467 270,468 285,471 360,471 380,474 510,474 530,478 1200,475 F 0,470 100,467 350,467 400,463 500,466 760,467 800,470 900,470 960,474 1130,478 1280,480', '#2c2458', 1.2);
line('E 222,512 640,512 700,500 800,465 880,463 1000,458 1200,450 1250,442 F 0,435 50,415 130,412 200,425 345,443 400,420 440,408 470,415 530,445 580,462 640,475 690,487 830,493 900,495 950,503 1060,508 1180,515 1240,512 1280,500', '#e02c3c', 1);
line('E 216,545 F 1247,545', '#f01010', 3.4);
const dots = (t, xs, y, c) => xs.forEach(x => box(t, x - 6, y - 6, x + 6, y + 6, c));
dots('E', [429, 449, 468, 488, 511, 591, 610, 775, 795], 343, '#f04848');
dots('E', [550], 343, '#40a8e0'); dots('E', [1201], 343, '#108010'); dots('F', [389], 343, '#108010');
dots('F', [630, 672, 937, 957, 1059], 343, '#e850e8'); dots('F', [874, 1078, 1201, 1241], 343, '#f04848');
dots('E', [429, 449, 468, 488, 511, 591, 610, 775, 795], 528, '#c83c50'); dots('F', [874, 1078, 1201, 1241], 528, '#c83c50');
const vt = (t, x, y, s, c) => text(X(t, x), Y(t, y), s, 13, c);
vt('E', 1203, 387, 'MAJOR', '#108010'); vt('E', 1199, 427, 'UP', '#4aa8dc');
vt('F', 390, 387, 'MAJOR', '#108010'); vt('F', 386, 426, 'UP', '#4aa8dc');
vt('E', 427, 428, 'silly', '#e81010'); vt('E', 488, 428, 'silly', '#e81010'); vt('E', 549, 428, 'UP', '#4aa8dc'); vt('F', 1078, 428, 'silly', '#e81010');
[630, 672, 937, 957, 1059].forEach(x => { vt('F', x, 387, 'P', '#ec5cec'); vt('F', x + 3, 465, 'r', '#ec5cec'); vt('F', x, 547, 'o', '#e030a0'); });
closePane();

/* axes */
const ax = '#4f5257';
seg(129.5, 100, 129.5, 866, ax); seg(1795.5, 100, 1795.5, 866, ax);
seg(62, 684.5, 1864, 684.5, ax); seg(62, 783.5, 1864, 783.5, ax); seg(129, 866.5, 1796, 866.5, ax);
gridY.forEach(g => {
  if (!g[1]) return;
  seg(125, g[0], 129, g[0], ax); seg(1796, g[0], 1801, g[0], ax);
  text(122, g[0] + 4, g[1], 12, '#555', 'end'); text(1805, g[0] + 4, g[1], 12, '#555', 'start');
});
gridX.forEach(g => { seg(g[0], 867, g[0], 871, ax); text(g[0], 886, g[1], 12, '#555', 'middle', g[1].length === 2 ? 'font-weight="700"' : ''); });
[[174, '1.14447', '#e45357'], [204, '1.14417', '#3d92e6'], [344, '1.14288', '#000'], [397, '1.14238', '#3d92e6'], [512, '1.14131', '#3d92e6']].forEach(p => {
  rect(69, p[0], 61, 19, p[2]); rect(1796, p[0], 61, 19, p[2]);
  seg(126, p[0] + 9.5, 130, p[0] + 9.5, '#fff'); seg(1796, p[0] + 9.5, 1800, p[0] + 9.5, '#fff');
  text(122, p[0] + 13, p[1], 12, '#fff', 'end'); text(1805, p[0] + 13, p[1], 12, '#fff', 'start');
});
rect(69, 364, 43, 19, '#000'); rect(1814, 364, 43, 19, '#000');
text(77, 377, '07:58', 12, '#fff', 'start'); text(1848, 377, '07:58', 12, '#fff', 'end');
svg.innerHTML = out.join('');

/* indicator legend buttons */
const icons = [
  ['Hide', '<circle cx="7" cy="7" r="4.500"/><circle cx="7" cy="7" r=".5"/>'],
  ['Format', '<circle cx="7" cy="7" r="3"/><path d="M7 0v3M7 11v3M0 7h3M11 7h3M2 2l2 2M10 10l2 2M2 12l2-2M10 4l2-2"/>'],
  ['Source', '<path d="M5 1Q3 1 3 4T1 7q2 0 2 3t2 3M9 1q2 0 2 3t2 3q-2 0-2 3t-2 3"/>'],
  ['Add', '<path d="M7 1v12M1 7h12"/>'],
  ['Remove', '<path d="M2 2l10 10M12 2L2 12"/>']
];
document.querySelectorAll('.legend:not(.main)').forEach(l => {
  l.insertAdjacentHTML('beforeend', '<svg width="10" height="6" viewBox="0 0 10 6"><path d="M1 1l4 4 4-4" fill="none" stroke="#222" stroke-width="1.500"/></svg><span class="btns">' + icons.map(i => `<button aria-label="${i[0]}"><svg viewBox="0 0 14 14">${i[1]}</svg></button>`).join('') + '</span>');
});
})();
```
